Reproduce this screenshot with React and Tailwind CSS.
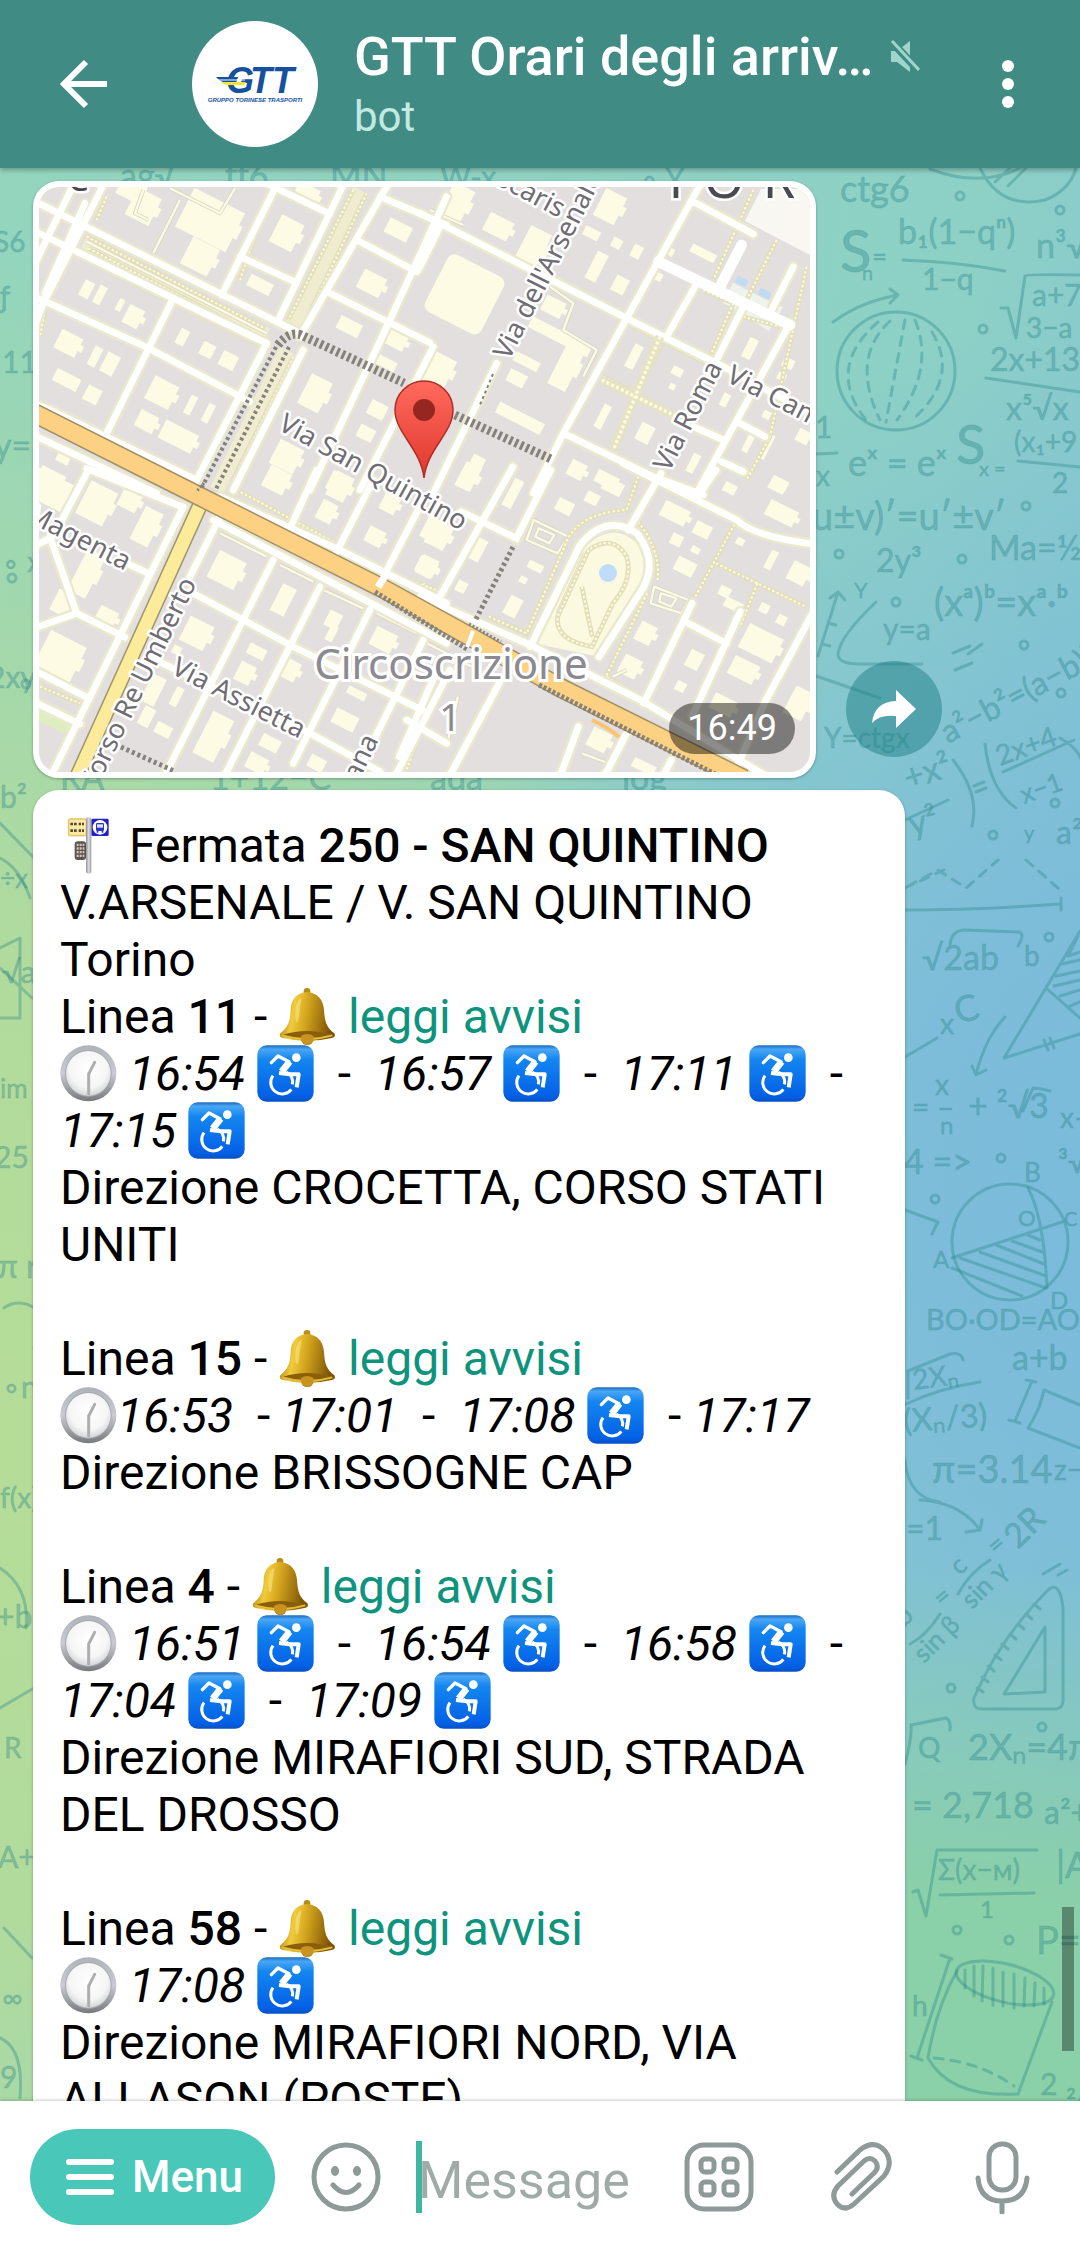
import React from "react";

/* ---------- map ---------- */

const NW = "translate(-19 -17) scale(0.3333)";
const NE = "translate(381 -17) scale(0.3333)";
const SW = "translate(-19 283) scale(0.3333)";
const SE = "translate(381 283) scale(0.3443 0.3333)";

const ROADS = [
  [NW, "M40 92L770 455L850 495 M40 182L740 520 M40 378L380 532L690 695 M750 45L930 132 M1020 215L1190 305 M930 370L1230 518 M660 260L830 338"],
  [NW, "M250 45L70 400L40 480 M160 45L40 290 M195 100L75 370 M770 45L605 375 M970 45L775 450 M1100 50L840 500 M1280 80L1110 450L870 960 M460 385L255 800 M740 520L525 940 M850 540L640 960 M1240 530L1020 960"],
  [NW, "M1080 80L1280 165 M40 700L90 720L530 930 M40 795L410 970"],
  [NE, "M0 130L620 445L910 590L1190 740 M820 95L1000 192 M60 170L-5 300 M840 45L430 790L340 970 M825 350L740 500 M970 410L870 610 M1110 460L830 970 M230 580L40 970 M430 790L700 920L850 975 M820 770L915 812 M960 760L1035 800 M905 875L970 905 M1120 290L1050 430"],
  [SW, "M200 -5L490 112 M205 0L110 180 M490 110L95 915 M580 150L1280 520 M600 80L960 240L1280 400 M600 140L510 320 M760 270L435 915 M900 350L615 915 M1050 420L820 880 M1210 510L1010 915 M1290 600L1130 910 M890 0L810 175 M1060 30L950 245 M1210 90L1080 340"],
  [SW, "M510 365L820 530L1210 722 M395 565L870 790L1080 905 M90 200L170 430L50 472 M170 430L315 502 M90 205L50 225 M310 275L385 310 M50 605L200 682 M50 700L180 762 M1160 750L1280 820"],
  [SE, "M0 380L320 525L640 690L1000 915 M270 -10L55 385 M380 0L280 205L120 125 M320 530L465 225Q540 130 630 190Q690 270 650 350L520 560 M700 10L605 180 M590 -20L920 150Q970 200 1140 222 M860 0L810 75 M790 400L650 700 M930 425L790 740 M1140 430L1000 700L925 880 M770 455L890 520 M50 600L-60 860 M600 790L540 910 M730 870L710 910 M230 640L90 910 M460 770L410 910"],
];

const WIDE_ROADS = [[NE, "M715 275L870 350L1110 465 M965 225L895 360"]];

const TREES = [
  [NW, "M200 200L735 475 M205 235L715 500 M180 260L430 385 M470 400L720 525 M1000 60L805 450 M1040 70L850 470 M720 560L560 880 M820 560L640 930 M90 720L250 790 M270 800L520 915 M660 330L745 80 M260 80L230 150 M75 420L60 500"],
  [NE, "M150 200L600 430 M640 470L900 600 M720 530L580 820 M550 620L760 730 M1000 60L880 330 M1070 210L980 390 M850 360L940 400L870 560 M970 440L1080 470 M1160 290L1050 800L980 930"],
  [SW, "M650 60L940 215 M980 240L1090 300 M1110 310L1250 360 M800 160L640 90 M60 650L180 700 M180 720L140 810 M1210 760L1160 900"],
  [SE, "M70 405L10 340 M200 440L310 490L420 230Q450 130 600 120L640 0 M680 20L620 140Q700 230 690 330 M660 370L540 620L640 680 M920 150L800 380 M860 280L1120 410 M980 340L930 470 M490 240L400 440Q390 510 500 530L560 400Q620 330 600 260Q560 190 490 240 M470 350L500 500"],
];

const PATHS = [
  [NW, "M480 90L400 250 M370 60L345 130L385 150 M450 55L600 130L645 55 M200 215L740 490"],
  [NE, "M390 350L460 400L430 480L530 540L490 620 M30 120L130 165"],
  [SW, "M600 190L740 260 M780 285L880 335 M910 360L1030 415 M1070 430L1190 490 M220 10L480 120"],
  [SE, "M330 150L430 200L400 250L310 210Z M345 175L390 195L375 220L335 200Z M680 350L780 390L760 430L670 400Z M700 370L745 385L730 410L695 395Z M20 520L150 590 M470 850L560 885 M20 640L-10 790 M110 680L80 820 M480 250L400 430 M560 620L600 600"],
];

const YARDS = [
  [NW, [[370,110,80,90],[570,150,170,130],[540,260,90,90],[800,190,75,90],[860,70,70,50],[720,345,75,38],[1135,180,75,48],[1055,340,75,62],[988,470,72,42],[200,358,32,52],[240,375,24,58],[340,440,50,60],[300,405,18,38],[487,502,28,50],[562,540,40,42],[625,572,50,46],[145,520,70,62],[225,560,26,62],[270,582,42,64],[140,630,80,40],[217,675,46,48],[425,668,80,76],[512,705,22,60],[565,730,22,60],[380,755,60,54],[475,800,110,60],[885,670,70,100],[1072,720,54,46],[1038,790,50,40],[800,860,80,80],[1130,510,60,50],[1100,580,60,30],[1220,620,60,50],[90,930,80,60],[130,865,40,30],[960,950,60,80],[335,60,80,60]]],
  [NE, [[60,600,70,90],[235,170,80,60],[340,230,70,110],[110,100,70,110],[570,110,70,90],[515,190,50,30],[590,220,30,30],[650,245,30,40],[530,290,36,90],[600,345,42,50],[400,410,64,50],[420,500,200,36],[440,590,60,140],[320,575,80,30],[290,625,56,40],[300,745,150,36],[750,245,24,24],[850,250,80,26],[715,320,24,24],[642,560,28,76],[772,605,34,26],[757,650,18,18],[675,790,44,56],[548,740,24,76],[915,690,22,40],[990,535,28,64],[1105,580,34,30],[1085,620,26,22],[1040,735,24,24],[990,810,20,80],[1150,800,40,40],[160,900,40,90],[470,900,50,50],[820,880,24,60],[1080,940,50,30],[1040,830,20,80],[560,930,70,40]]],
  [SW, [[90,60,120,90],[230,100,90,110],[380,170,60,110],[330,90,60,60],[200,310,60,140],[130,400,60,70],[120,560,120,120],[260,440,60,50],[770,30,70,70],[955,40,60,60],[920,125,50,62],[1110,100,50,56],[1065,200,54,50],[1220,290,60,50],[620,300,90,90],[790,390,46,90],[940,450,42,50],[935,490,24,50],[530,490,80,80],[710,545,56,34],[675,610,50,60],[470,540,26,26],[1090,510,70,60],[1010,670,60,24],[975,750,74,48],[400,660,46,90],[470,680,24,60],[380,740,36,60],[430,780,50,36],[580,800,70,140],[750,820,60,40],[710,880,60,50],[810,600,50,60],[890,880,50,40],[1240,180,60,70]]],
  [SE, [[140,20,50,80],[270,70,30,90],[55,195,62,76],[20,290,50,60],[120,350,30,34],[170,240,30,70],[335,290,46,24],[270,410,40,60],[300,330,22,20],[420,110,50,40],[560,50,60,40],[500,85,40,34],[740,130,80,50],[820,180,50,40],[745,210,34,34],[770,290,60,44],[800,240,26,20],[1020,270,22,60],[1100,310,56,60],[1040,45,50,40],[900,55,38,30],[1050,130,90,50],[930,215,24,22],[885,365,34,30],[910,405,54,30],[1000,415,28,28],[1050,450,28,30],[655,490,50,60],[610,590,56,60],[797,570,42,54],[757,650,30,30],[990,520,110,80],[940,600,80,60],[880,705,70,50],[1100,700,60,90],[520,810,60,60],[650,890,70,30]]],
];

function MapLabel({ x, y, a, end, size = 27, color = "#6f6c73", children }) {
  return (
    <text
      x={x}
      y={y}
      transform={`rotate(${a} ${x} ${y})`}
      textAnchor={end ? "end" : "start"}
      fontSize={size}
      fill={color}
      stroke="#fff"
      strokeWidth="5"
      strokeLinejoin="round"
      paintOrder="stroke"
    >
      {children}
    </text>
  );
}

function layer(list, props) {
  return list.map(([t, d], i) => <path key={i} transform={t} d={d} fill="none" {...props} />);
}

function StreetMap() {
  return (
    <svg
      viewBox="0 0 771 585"
      preserveAspectRatio="xMidYMid slice"
      className="block h-full w-full font-['Noto_Sans',sans-serif]"
      role="img"
      aria-label="Mappa della fermata"
    >
      <defs>
        <linearGradient id="pin" x1="0" y1="0" x2="0" y2="1">
          <stop offset="0" stopColor="#ff6a5c" />
          <stop offset="1" stopColor="#e0382f" />
        </linearGradient>
      </defs>
      <rect width="771" height="585" fill="#e3dfdf" />
      {YARDS.map(([t, rects], q) => (
        <g key={q} transform={t} fill="#fdfbe4">
          {rects.map(([cx, cy, w, h], i) => (
            <g key={i} transform={`rotate(27 ${cx} ${cy})`}>
              <rect x={cx - w / 2} y={cy - h / 2} width={w} height={h} />
              {w > 48 && h > 48 && <rect x={cx + w / 2 - 4} y={cy - h / 5} width="16" height={h / 3} />}
            </g>
          ))}
        </g>
      ))}
      <rect x="392" y="78" width="63" height="64" rx="8" transform="rotate(27 430 113)" fill="#fdfbe4" />
      <g transform={NW} fill="none" stroke="#efecd0" strokeWidth="44">
        <path d="M190 220L740 495 M1020 60L815 470 M800 540L590 960" />
      </g>
      <g transform={SE}>
        <path d="M330 520L480 230Q560 150 630 220Q670 290 630 370L520 560Z" fill="#fbfae0" />
        <path d="M210 650L460 770L410 910L85 910Z" fill="#e3dfdf" />
      </g>
      <path d="M722 2L771 2L771 68L706 34Z" fill="#f8f7f2" />
      <path d="M694 96L722 110L712 130L684 116Z M716 108L744 120L730 144L704 128Z" fill="#eef3ee" />
      <rect x="697" y="91" width="12" height="7" fill="#bfdcf5" transform="rotate(25 703 94)" />
      <rect x="720" y="103" width="12" height="7" fill="#bfdcf5" transform="rotate(25 726 106)" />
      <path d="M0 512L36 528L28 548L0 534Z" fill="#dfeec0" />
      {layer(PATHS, { stroke: "#d9d6bd", strokeWidth: 12, strokeLinejoin: "round" })}
      {layer(PATHS, { stroke: "#fbfae6", strokeWidth: 7, strokeLinejoin: "round" })}
      {layer(TREES, { stroke: "#e2dfb9", strokeWidth: 14 })}
      {layer(TREES, { stroke: "#fdfbe4", strokeWidth: 6, strokeDasharray: "7 7" })}
      {layer(ROADS, { stroke: "#ebe9cd", strokeWidth: 34, strokeLinecap: "round" })}
      {layer(ROADS, { stroke: "#fff", strokeWidth: 20, strokeLinecap: "round" })}
      {layer(WIDE_ROADS, { stroke: "#fff", strokeWidth: 32, strokeLinecap: "round" })}
      <g transform={NE} fill="none">
        <path d="M720 500L580 840 M545 630L770 740" stroke="#e6e3c0" strokeWidth="26" />
        <path d="M720 500L580 840 M545 630L770 740" stroke="#fdfbe4" strokeWidth="10" strokeDasharray="9 7" />
      </g>
      <circle cx="569" cy="386" r="9" fill="#bfdcf8" />

      <path d="M162 316L38 590" stroke="#9e9669" strokeWidth="16" />
      <path d="M162 316L38 590" stroke="#fdeb9c" strokeWidth="13" />
      <path d="M-5 226L160 309L345 402L430 449L520 500L705 592" fill="none" stroke="#a39063" strokeWidth="20" />
      <path d="M-5 226L160 309L345 402L430 449L520 500L705 592" fill="none" stroke="#fdd184" strokeWidth="17" />
      <path d="M553 533Q572 542 580 550" fill="none" stroke="#fdc36c" strokeWidth="4" />
      <g fill="none" stroke="#85827c">
        <path d="M239 158Q250 144 262 148L365 196 M416 228L512 272" strokeWidth="9" strokeDasharray="3 3" />
        <path d="M237 160L162 302 M250 160L176 304" strokeWidth="4" strokeDasharray="3 3" />
        <path d="M474 360L436 434" strokeWidth="5" strokeDasharray="3 3" />
        <path d="M336 405L428 462 M500 498L690 594" strokeWidth="5" strokeDasharray="3 2" />
        <path d="M82 560L135 584" strokeWidth="5" strokeDasharray="3 3" />
        <path d="M454 187L440 220" strokeWidth="2" strokeDasharray="3 3" />
        <path d="M430 437L462 455 M165 296L158 304" strokeWidth="3" strokeDasharray="2 2" />
      </g>
      <path d="M339 400L348 386" stroke="#fff" strokeWidth="7" />
      <path d="M434 444L428 460" stroke="#fff" strokeWidth="4" />

      <MapLabel x={520} y={31} a={28} end>scaris</MapLabel>
      <MapLabel x={470} y={174} a={-63}>Via dell'Arsenale</MapLabel>
      <MapLabel x={238} y={242} a={29}>Via San Quintino</MapLabel>
      <MapLabel x={630} y={286} a={-63}>Via Roma</MapLabel>
      <MapLabel x={686} y={194} a={27}>Via Cam</MapLabel>
      <MapLabel x={86} y={384} a={27} end>Magenta</MapLabel>
      <MapLabel x={158} y={396} a={-64} end>Corso Re Umberto</MapLabel>
      <MapLabel x={131} y={486} a={27}>Via Assietta</MapLabel>
      <MapLabel x={340} y={553} a={-64} end>ana</MapLabel>
      <g textAnchor="middle">
        <text x="412" y="492" fontSize="42" fill="#8b8a90" stroke="#fff" strokeWidth="6" paintOrder="stroke">Circoscrizione</text>
        <text x="411" y="544" fontSize="38" fill="#8b8a90" stroke="#fff" strokeWidth="6" paintOrder="stroke">1</text>
        <g fontSize="52" fill="#4a4950" stroke="#fff" strokeWidth="5" paintOrder="stroke">
          <text x="637" y="11">T</text>
          <text x="685" y="11">O</text>
          <text x="740" y="11">R</text>
          <text x="39" y="4" fontSize="34">C</text>
        </g>
      </g>
      <path
        d="M385 291C382 262 356 246 356 223A29 29 0 0 1 414 223C414 246 388 262 385 291Z"
        fill="url(#pin)"
        stroke="#b02c25"
        strokeWidth="1.5"
      />
      <circle cx="385" cy="223" r="11" fill="#962720" />
    </svg>
  );
}

/* ---------- wallpaper ---------- */

const FORMULAS = [
  [840, 34, 36, "ctg6"], [840, 104, 58, "S"], [862, 112, 20, "n"], [872, 98, 26, "="],
  [898, 76, 34, "b₁(1−qⁿ)"], [922, 122, 30, "1−q"], [1036, 90, 34, "n³√"],
  [1032, 138, 30, "a+7"], [1026, 170, 28, "3−a"], [990, 203, 32, "2x+13"], [1006, 252, 32, "x⁵√x"],
  [1014, 284, 28, "(x₁+9"], [1052, 325, 28, "2"], [956, 296, 54, "S"], [979, 308, 20, "x ="],
  [815, 270, 30, "1"], [816, 318, 28, "x"], [848, 308, 36, "eˣ = eˣ"], [812, 362, 38, "u±v)′=u′±v′"],
  [876, 404, 32, "2y³"], [989, 392, 34, "Ma=½"], [934, 448, 38, "(xᵃ)ᵇ=xᵃ·ᵇ"], [883, 472, 30, "y=a"],
  [854, 430, 22, "Y"], [824, 580, 28, "Y=ctgx"],
  [948, 576, 32, "a²−b²=(a−b)²", -28], [1000, 598, 28, "2x+4", -20], [1024, 636, 26, "x−1", -20],
  [908, 622, 34, "+x²", -18], [912, 668, 34, "y²", -14], [1024, 672, 20, "y"], [1056, 676, 32, "a²"],
  [922, 802, 34, "√2ab"], [1024, 798, 28, "b"], [958, 856, 36, "C", -15], [940, 866, 28, "x"],
  [935, 927, 28, "x"], [912, 950, 30, "= –"], [940, 966, 24, "n"], [968, 950, 34, "+ ²√3"],
  [904, 1006, 34, "4 =>"], [1060, 960, 28, "x–"], [1058, 1005, 30, "³√"],
  [1024, 1014, 26, "B"], [1018, 1058, 22, "O"], [1064, 1058, 20, "C"], [933, 1100, 24, "A"], [1050, 1141, 24, "D"],
  [926, 1162, 29, "BO·OD=AO·OC"], [1012, 1202, 34, "a+b"], [914, 1222, 28, "2Xₙ", -8],
  [904, 1264, 32, "(Xₙ/3)", -4], [932, 1315, 38, "π=3.14"], [1054, 1312, 28, "z−"],
  [906, 1372, 32, "=1"], [1018, 1382, 34, "2R", -45], [960, 1408, 26, "c", -45], [972, 1442, 26, "sin γ", -45],
  [904, 1460, 28, "b", -45], [924, 1496, 26, "sin β", -45], [942, 1440, 26, "=", -40], [996, 1388, 26, "=", -40],
  [918, 1590, 28, "Q"], [968, 1592, 36, "2Xₙ=4π"], [912, 1650, 36, "= 2,718"], [1044, 1656, 32, "a²+"],
  [938, 1712, 28, "Σ(x−м)"], [980, 1750, 24, "1"], [1056, 1710, 36, "|A|"], [1036, 1786, 38, "P="],
  [912, 1848, 28, "h"], [1040, 1927, 30, "2"], [1066, 1945, 30, "²⁄₃"],
  [-6, 84, 28, "S6"], [0, 140, 30, "ƒ"], [2, 205, 30, "11"], [-6, 290, 34, "y="], [2, 404, 28, "∘ x"],
  [-12, 520, 30, "2xy"], [0, 640, 30, "b²"], [0, 720, 26, "÷x"], [2, 815, 30, "√a"], [0, 930, 26, "im"],
  [-6, 1000, 30, "25"], [-2, 1110, 32, "π r"], [2, 1230, 30, "∘n"], [0, 1340, 28, "f(x)"], [-4, 1460, 32, "+b"],
  [4, 1590, 28, "R"], [-2, 1700, 30, "A+"], [2, 1840, 28, "∞"], [0, 1920, 30, "9"],
  [120, 20, 34, "ag√"], [225, 20, 34, "tƒ6"], [330, 20, 34, "MN"], [440, 20, 30, "W-x"], [640, 22, 30, "∘ Y"],
  [60, 622, 34, "RA"], [210, 622, 34, "1+12−C"], [430, 622, 34, "ada"], [622, 622, 34, "log"],
];

function Wallpaper() {
  return (
    <div
      aria-hidden="true"
      className="absolute inset-0 bg-[radial-gradient(ellipse_70%_45%_at_108%_52%,#79bbdb_0%,#7dbdd9_35%,transparent_100%),radial-gradient(ellipse_80%_62%_at_0%_66%,#b5dd98_0%,#b1db9d_40%,transparent_100%),linear-gradient(100deg,#93d5bd_0%,#8dd0c6_70%,#82c1d6_100%)]"
    >
      <div className="absolute inset-0 bg-[radial-gradient(ellipse_75%_32%_at_90%_104%,#8ad0a8_0%,#8ad0a8_45%,transparent_100%)]" />
      <svg viewBox="0 0 1080 1933" preserveAspectRatio="xMaxYMin slice" className="absolute inset-0 h-full w-full font-['Lato',sans-serif]">
        <g fill="#2a8589" fillOpacity="0.36" stroke="#2a8589" strokeOpacity="0.2" strokeWidth="1">
          {FORMULAS.map(([x, y, s, t, a = 0], i) => (
            <text key={i} x={x} y={y} fontSize={s} transform={`rotate(${a} ${x} ${y})`}>
              {t}
            </text>
          ))}
        </g>
        <g fill="none" stroke="#2a8589" strokeOpacity="0.36" strokeWidth="3" strokeLinecap="round" strokeLinejoin="round">
          <path d="M903 92Q960 94 1005 103 M833 154Q860 134 898 127L890 121M898 127L890 135" />
          <circle cx="896" cy="203" r="59" />
          <path d="M905 152L886 254 M890 153Q850 190 880 252 M878 154Q825 200 866 252 M915 152Q935 200 897 252 M932 164Q960 210 912 252" strokeDasharray="9 8" />
          <path d="M930 1Q980 20 1020 0 M980 0Q1000 42 1045 32Q1070 22 1076 0 M995 14L1010 0 M1008 18L1026 0" />
          <path d="M1001 140L1008 140L1016 170L1025 108Q1026 106 1080 107 M986 210L1080 224 M1018 293L1080 299 M816 286L837 285" />
          <path d="M818 488L838 424L830 430M838 424L845 432 M822 476L830 478M828 455L836 457 M876 434Q840 468 838 486Q838 496 860 496L922 496 M816 508L880 530 M953 485L970 478M968 486L982 476M955 502L972 495" />
          <path d="M985 576Q990 622 1016 640 M1003 604L1074 572 M953 592Q980 626 972 658 M905 652L948 632 M974 618L984 614M976 624L986 620 M1060 570Q1080 580 1084 600" />
          <path d="M905 720L948 700 M908 718L938 702L966 720L998 692 M1026 692L1060 722" strokeDasharray="9 8" />
          <path d="M905 742Q980 742 1060 736M1061 730V742 M950 776Q952 762 965 762L1018 764Q1026 765 1018 778" />
          <path d="M1080 763L1004 890L1080 866 M1046 820L1080 850 M1078 768L1068 788L1080 784M1062 796L1080 792M1056 808L1080 803M1054 818L1080 812M1060 828L1080 822M1070 838L1080 834 M1044 872L1048 882M1050 870L1054 880" />
          <path d="M1005 849Q985 870 976 907L972 898M976 907L986 902 M905 889L937 870 M1023 943L1033 920Q1040 920 1050 923" />
          <circle cx="1010" cy="1074" r="58" />
          <path d="M952 1090L1062 1054 M1028 1020Q1044 1050 1047 1120 M952 1100L1022 1128M960 1090L1046 1120M980 1084L1046 1108M996 1077L1044 1096M1012 1073L1042 1084M1028 1067L1040 1072" />
          <path d="M905 1042L938 1054L932 1066 M908 1230V1203L950 1186Q962 1184 963 1192 M906 1236Q940 1220 980 1214 M1032 1213L1015 1253M1026 1212L1036 1214M1009 1252L1020 1255 M1044 1222L1080 1237M1044 1222Q1040 1242 1028 1260L1080 1280" />
          <path d="M905 1292Q908 1330 940 1334 M920 1332Q960 1334 980 1362L966 1364M980 1362L982 1352 M958 1426Q970 1404 990 1392 M910 1476Q926 1468 940 1446 M1043 1406L1060 1396M1058 1407L1067 1402" />
          <path d="M1048 1422Q1000 1470 974 1530Q972 1542 984 1541H1056Q1064 1540 1063 1530V1440Q1060 1412 1048 1422Z M1045 1459V1524L1004 1526Z M1034 1436l6 5M1026 1446l6 5M1018 1456l6 5M1010 1466l6 5M1002 1476l6 5M995 1487l6 5M988 1498l6 5M982 1509l6 5M977 1520l6 4" />
          <path d="M905 1596Q912 1570 911 1557L946 1550Q951 1552 950 1562 M913 1724L918 1722L926 1748L937 1682H1037 M940 1727L1034 1725" />
          <ellipse cx="1005" cy="1815" rx="50" ry="19" transform="rotate(14 1005 1815)" />
          <path d="M957 1803Q936 1840 928 1890Q950 1930 1018 1926L1052 1834 M950 1790L917 1890 M941 1787L952 1791 M911 1888L922 1892 M965 1802V1820M974 1798V1828M983 1798L982 1833M993 1800V1837M1003 1804V1838M1014 1806V1840M1025 1810L1024 1838M1035 1815L1034 1838M1044 1820V1836" />
          <path d="M934 1890Q980 1894 1014 1918" strokeDasharray="9 8" />
          <path d="M0 655L34 690 M0 780L20 770L20 850L0 850M0 800L32 830 M0 690Q20 700 30 730 M4 1140A24 24 0 0 1 34 1180 M0 1400Q30 1420 26 1460 M0 1540L34 1520 M4 1760L32 1790 M0 1870Q24 1880 20 1930" />
          {[[960,28],[1060,42],[983,161],[1026,338],[839,386],[962,391],[896,434],[1024,477],[1061,525],[1055,635],[993,667],[1049,769],[1001,990],[935,1031],[951,1520],[1042,1559],[957,1762],[1009,1772],[12,410],[26,516]].map(([x, y]) => (
            <circle key={`${x}-${y}`} cx={x} cy={y} r="4" />
          ))}
        </g>
      </svg>
    </div>
  );
}

/* ---------- emoji ---------- */

const EMOJI = "inline-block size-[57px] align-top";

function Defs() {
  return (
    <svg width="0" height="0" className="absolute" aria-hidden="true">
      <defs>
        <linearGradient id="blue" x1="0" y1="0" x2="0" y2="1">
          <stop offset="0" stopColor="#1b6cc0" />
          <stop offset="0.07" stopColor="#4aa6f5" />
          <stop offset="0.25" stopColor="#1486f0" />
          <stop offset="0.9" stopColor="#0360e6" />
          <stop offset="1" stopColor="#0a50c4" />
        </linearGradient>
        <linearGradient id="gold" x1="0" y1="0" x2="1" y2="0.15">
          <stop offset="0" stopColor="#9a6f0c" />
          <stop offset="0.3" stopColor="#f1cb3c" />
          <stop offset="0.55" stopColor="#d2a31c" />
          <stop offset="1" stopColor="#7d5408" />
        </linearGradient>
        <linearGradient id="rim" x1="0" y1="0" x2="0" y2="1">
          <stop offset="0" stopColor="#aeb3bb" />
          <stop offset="0.5" stopColor="#c9cbd0" />
          <stop offset="1" stopColor="#77797d" />
        </linearGradient>
        <radialGradient id="face" cx="0.5" cy="0.4" r="0.6">
          <stop offset="0" stopColor="#ffffff" />
          <stop offset="0.7" stopColor="#f6f6f7" />
          <stop offset="1" stopColor="#d6d7da" />
        </radialGradient>
        <linearGradient id="pole" x1="0" y1="0" x2="1" y2="0">
          <stop offset="0" stopColor="#8f8f96" />
          <stop offset="0.5" stopColor="#dcdce0" />
          <stop offset="1" stopColor="#9a9aa0" />
        </linearGradient>
      </defs>
    </svg>
  );
}

function BusStop() {
  return (
    <svg viewBox="0 0 171 171" className={EMOJI} role="img" aria-label="fermata">
      <rect x="25" y="5" width="54" height="52" rx="5" fill="#f3d272" stroke="#d9b24c" strokeWidth="2" />
      <rect x="29" y="9" width="48" height="44" rx="3" fill="#fbe9a8" />
      <g fill="#57492c">
        <path d="M31 17h8v8h-8zM42 17h8v8h-8zM56 17h7v8h-7zM66 17h6v8h-6zM31 37h8v8h-8zM42 37h8v8h-8zM56 37h7v8h-7zM66 37h6v8h-6z" />
      </g>
      <rect x="94" y="5" width="52" height="52" rx="4" fill="#2420c8" />
      <circle cx="120" cy="31" r="22" fill="#fff" />
      <rect x="108" y="18" width="24" height="24" rx="4" fill="#2a35c4" />
      <path d="M111 22h18v10h-18z" fill="#dfe5ff" />
      <path d="M110 42h5v5h-5zM125 42h5v5h-5z" fill="#2a35c4" />
      <rect x="44" y="73" width="34" height="56" rx="9" fill="#5e5450" />
      <path d="M50 80h6v7h-6zM59 80h6v7h-6zM68 80h5v7h-5zM50 91h6v7h-6zM59 91h6v7h-6zM68 91h5v7h-5zM50 102h6v7h-6zM59 102h6v7h-6zM68 102h5v7h-5zM50 113h6v7h-6zM59 113h6v7h-6zM68 113h5v7h-5z" fill="#cfc6c0" />
      <rect x="78" y="1" width="16" height="169" rx="7" fill="url(#pole)" />
    </svg>
  );
}

function Bell() {
  return (
    <svg viewBox="0 0 171 171" className={EMOJI} role="img" aria-label="campana">
      <circle cx="84" cy="10" r="10" fill="#b98b17" />
      <circle cx="85" cy="152" r="19" fill="#a3731a" />
      <path d="M84 12C52 14 36 36 35 66C34 100 26 118 4 136Q-2 146 12 150Q84 168 158 150Q172 146 166 136C142 118 137 100 135 66C133 36 116 14 84 12Z" fill="url(#gold)" />
      <path d="M12 140Q84 118 158 140Q150 152 84 154Q20 152 12 140Z" fill="#8a5f0c" />
      <path d="M10 142Q84 164 160 142" fill="none" stroke="#e6bd39" strokeWidth="5" />
      <path d="M66 144Q84 132 104 144Q106 168 85 170Q64 168 66 144Z" fill="#c9931f" />
      <path d="M50 60Q54 34 68 30Q62 60 58 100Q46 112 50 60Z" fill="#fff2a0" opacity="0.45" />
    </svg>
  );
}

function Clock() {
  return (
    <svg viewBox="0 0 171 171" className={EMOJI} role="img" aria-label="orologio">
      <circle cx="85" cy="85" r="84" fill="url(#rim)" />
      <circle cx="85" cy="85" r="70" fill="#a5a7ab" />
      <circle cx="85" cy="85" r="67" fill="url(#face)" />
      <path d="M104 52L86 87V146" fill="none" stroke="#aeaeae" strokeWidth="9" strokeLinecap="round" strokeLinejoin="round" />
    </svg>
  );
}

function Accessible() {
  return (
    <svg viewBox="0 0 171 171" className={EMOJI} role="img" aria-label="accessibile">
      <rect x="1" y="1" width="169" height="169" rx="28" fill="url(#blue)" />
      <circle cx="118" cy="38" r="13" fill="#fff" />
      <g fill="none" stroke="#fff" strokeLinejoin="round">
        <path d="M43 53L63 33L96 50" strokeWidth="10" strokeLinecap="round" />
        <path d="M98 50L74 80" strokeWidth="20" />
        <path d="M66 84L100 88H125L119 127" strokeWidth="12" />
        <path d="M48 92A32 32 0 1 0 103 133M88 81A32 32 0 0 1 106 118" strokeWidth="9" />
      </g>
    </svg>
  );
}

/* ---------- message ---------- */

const STOPS = [
  {
    line: "11",
    times: [["16:54", true, " ", "  -  "], ["16:57", true, "", "  -  "], ["17:11", true, "", "  -  "], ["17:15", true, "", ""]],
    direction: "CROCETTA, CORSO STATI UNITI",
  },
  {
    line: "15",
    times: [["16:53", false, "", "  - "], ["17:01", false, "", "  -  "], ["17:08", true, "", "  - "], ["17:17", false, "", ""]],
    direction: "BRISSOGNE CAP",
  },
  {
    line: "4",
    times: [["16:51", true, " ", "  -  "], ["16:54", true, "", "  -  "], ["16:58", true, "", "  -  "], ["17:04", true, "", "  -  "], ["17:09", true, "", ""]],
    direction: "MIRAFIORI SUD, STRADA DEL DROSSO",
  },
  { line: "58", times: [["17:08", true, " ", ""]], direction: "MIRAFIORI NORD, VIA ALLASON (POSTE)" },
];

function Stop({ line, times, direction }) {
  return (
    <section className="mb-[57px]">
      <p>
        Linea <b className="font-medium">{line}</b> - <Bell />{" "}
        <a href="#avvisi" className="text-[#0e937c]">
          leggi avvisi
        </a>
      </p>
      <p className="whitespace-pre-wrap">
        <Clock />
        {times.map(([time, accessible, before, after]) => (
          <React.Fragment key={time}>
            {before}
            <i>{time}</i>
            {accessible && (
              <>
                {" "}
                <Accessible />
              </>
            )}
            {after}
          </React.Fragment>
        ))}
      </p>
      <p>Direzione {direction}</p>
    </section>
  );
}

/* ---------- page ---------- */

function Logo() {
  return (
    <svg viewBox="0 0 126 126" className="size-[126px] shrink-0 rounded-full bg-white" role="img" aria-label="GTT">
      <g fill="#15519c" fontFamily="Liberation Sans, sans-serif" fontWeight="700" fontStyle="italic">
        <text x="34" y="72" fontSize="36">G</text>
        <text x="58" y="72" fontSize="36">TT</text>
        <text x="63" y="81" fontSize="6" textAnchor="middle">GRUPPO TORINESE TRASPORTI</text>
      </g>
      <path d="M24 56H46L44 62H35Q28 61 24 56Z" fill="#15519c" />
      <path d="M29 61H54L52 64H34Q31 63 29 61Z" fill="#f3e43c" />
      <path d="M25 59H53" stroke="#fff" strokeWidth="1" />
    </svg>
  );
}

export default function App() {
  return (
    <div className="flex h-screen flex-col overflow-hidden bg-white font-['Roboto',sans-serif]">
      <Defs />
      <header className="relative z-20 flex h-42 shrink-0 items-center bg-[#408b83] pr-12 pl-12 text-white shadow-[0_2px_5px_rgba(0,0,0,0.3)]">
        <button type="button" aria-label="Indietro" className="mr-[72px]">
          <svg viewBox="0 0 72 72" className="size-18" fill="none" stroke="#fff" strokeWidth="6">
            <path d="M59 36H17M38 14L16 36L38 58" />
          </svg>
        </button>
        <Logo />
        <div className="ml-9 min-w-0 flex-1 pt-1">
          <div className="flex items-center">
            <h1 className="truncate text-[54px] leading-[62px] font-medium">GTT Orari degli arriv…</h1>
            <svg viewBox="0 0 30 34" className="ml-4 h-[34px] w-[30px] shrink-0" aria-label="Silenziato">
              <path d="M1 11H7L20 1V32L7 22H1Z" fill="#9fd5cc" />
              <path d="M0 0L30 32" stroke="#408b83" strokeWidth="8" />
              <path d="M2 1L29 30" stroke="#9fd5cc" strokeWidth="3" />
            </svg>
          </div>
          <p className="text-[42px] leading-[58px] text-[#c3e9e3]">bot</p>
        </div>
        <button type="button" aria-label="Altro">
          <svg viewBox="0 0 48 48" className="size-12" fill="#fff">
            <circle cx="24" cy="6" r="6" />
            <circle cx="24" cy="24" r="6" />
            <circle cx="24" cy="42" r="6" />
          </svg>
        </button>
      </header>

      <main className="relative min-h-0 flex-1 overflow-hidden">
        <Wallpaper />
        <div className="relative flex flex-col gap-3 pt-[13px] pr-[138px] pl-[33px]">
          <div className="flex items-end gap-[30px]">
            <article className="relative aspect-[783/597] w-[783px] overflow-hidden rounded-[26px] border-[6px] border-white bg-white shadow-[0_1px_3px_rgba(0,0,0,0.3)]">
              <StreetMap />
              <time className="absolute right-[15px] bottom-[18px] rounded-full bg-black/45 px-[18px] text-[36px] leading-[51px] text-white">
                16:49
              </time>
            </article>
            <button
              type="button"
              aria-label="Inoltra"
              className="mb-[21px] flex size-24 shrink-0 items-center justify-center rounded-full bg-[#1f7f86]/50"
            >
              <svg viewBox="0 0 44 38" className="h-[38px] w-11">
                <path d="M24 0L44 19L24 38V26Q8 24 0 33Q2 12 24 11Z" fill="#fff" />
              </svg>
            </button>
          </div>
          <article className="w-[872px] rounded-[26px] bg-white px-[27px] pt-[27px] text-[48px] leading-[57px] text-black shadow-[0_1px_3px_rgba(0,0,0,0.3)]">
            <p>
              <BusStop /> Fermata <b className="font-medium">250 - SAN QUINTINO</b>
            </p>
            <p>V.ARSENALE / V. SAN QUINTINO</p>
            <p>Torino</p>
            {STOPS.map((stop) => (
              <Stop key={stop.line} {...stop} />
            ))}
          </article>
        </div>
        <div className="absolute right-1.5 bottom-[50px] h-36 w-3 bg-black/35" />
      </main>

      <footer className="relative z-20 flex h-37 shrink-0 items-center bg-white pt-1 pr-12 pl-[30px] shadow-[0_-1px_3px_rgba(0,0,0,0.2)]">
        <button
          type="button"
          className="flex h-24 w-[245px] shrink-0 items-center gap-[18px] rounded-full bg-[#49c7b8] pl-9 text-[44px] font-medium text-white"
        >
          <svg viewBox="0 0 48 36" className="h-9 w-12" stroke="#fff" strokeWidth="6" strokeLinecap="round">
            <path d="M3 3H45M3 18H45M3 33H45" />
          </svg>
          Menu
        </button>
        <button type="button" aria-label="Emoji" className="ml-9">
          <svg viewBox="0 0 70 70" className="size-[70px]" fill="none" stroke="#8d9a97" strokeWidth="5" strokeLinecap="round">
            <circle cx="35" cy="35" r="32" />
            <ellipse cx="24" cy="29" rx="4" ry="5" fill="#8d9a97" stroke="none" />
            <ellipse cx="46" cy="29" rx="4" ry="5" fill="#8d9a97" stroke="none" />
            <path d="M22 43Q35 58 48 43" />
          </svg>
        </button>
        <span className="ml-[35px] h-18 w-1.5 shrink-0 bg-[#3fb5a3]" />
        <input
          type="text"
          aria-label="Message"
          placeholder="Message"
          className="-ml-1 min-w-0 flex-1 bg-transparent pt-2 text-[52px] leading-[62px] text-black outline-none placeholder:text-[#a0aba8]"
        />
        <button type="button" aria-label="Comandi">
          <svg viewBox="0 0 70 70" className="size-[70px]" fill="none" stroke="#8d9a97" strokeWidth="5">
            <rect x="3" y="3" width="64" height="64" rx="17" />
            <rect x="17" y="17" width="13" height="13" rx="4" />
            <rect x="40" y="17" width="13" height="13" rx="4" />
            <rect x="17" y="40" width="13" height="13" rx="4" />
            <rect x="40" y="40" width="13" height="13" rx="4" />
          </svg>
        </button>
        <button type="button" aria-label="Allega" className="ml-[74px]">
          <svg viewBox="0 0 70 70" className="size-[70px]" fill="none" stroke="#8d9a97" strokeWidth="5" strokeLinecap="round">
            <path d="M9 30L32 8Q46 -3 57 9Q66 21 56 34L26 62Q17 70 9 62Q2 53 10 44L36 19Q42 14 47 19Q52 25 46 31L24 52" />
          </svg>
        </button>
        <button type="button" aria-label="Registra" className="ml-[74px]">
          <svg viewBox="0 0 60 74" className="h-[74px] w-[60px]" fill="none" stroke="#8d9a97" strokeWidth="5" strokeLinecap="round">
            <rect x="17" y="4" width="27" height="46" rx="13" />
            <path d="M6 38Q8 61 30 61Q53 61 55 38M30 61V72" />
          </svg>
        </button>
      </footer>
    </div>
  );
}
